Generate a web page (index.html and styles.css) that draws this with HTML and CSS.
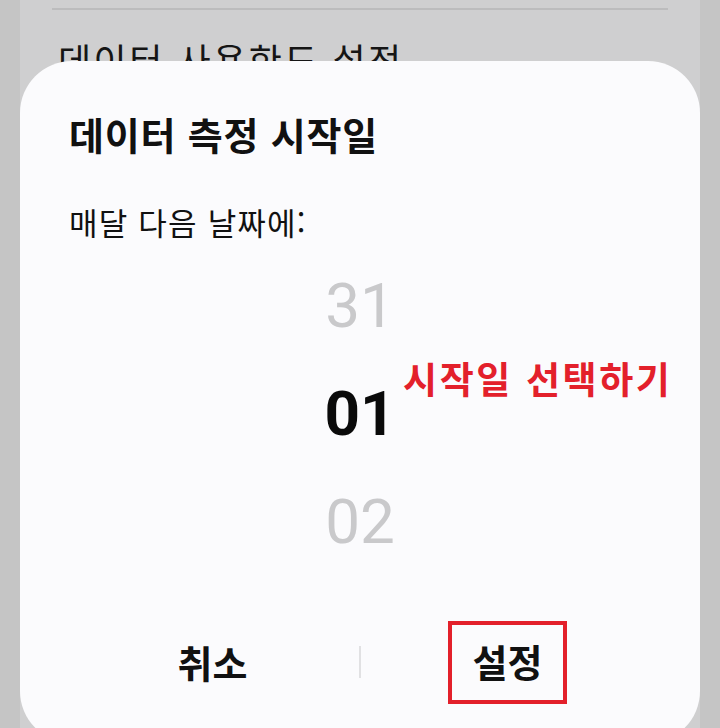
FILE: index.html
```html
<!DOCTYPE html>
<html lang="ko">
<head>
<meta charset="utf-8">
<link rel="stylesheet" href="styles.css">
</head>
<body>
<div class="screen">
  <div class="backdrop">
    <div class="rule"></div>
    <div class="back-title">데이터 사용한도 설정</div>
  </div>
  <div class="dialog">
    <h1 class="title">데이터 측정 시작일</h1>
    <p class="label">매달 다음 날짜에:</p>
    <div class="picker">
      <div class="item dim">31</div>
      <div class="item sel">01</div>
      <div class="item dim">02</div>
    </div>
    <div class="note">시작일 선택하기</div>
    <div class="actions">
      <div class="btn">취소</div>
      <div class="sep"></div>
      <div class="btn"><span class="boxed">설정</span></div>
    </div>
  </div>
</div>
</body>
</html>
```
FILE: styles.css
```css
* { box-sizing: border-box; margin: 0; padding: 0; }
html, body { width: 720px; height: 728px; overflow: hidden; }
body {
  background: #c5c5c5;
  font-family: "Noto Sans CJK KR", "Noto Sans", sans-serif;
  color: #111;
}
.screen { position: relative; width: 720px; height: 728px; }
.backdrop {
  margin: 0 20px;
  height: 728px;
  background: #cfcfd0;
  padding: 8px 32px 0;
}
.rule { height: 2px; background: #bcbcbd; }
.back-title {
  margin-top: 24px;
  padding-left: 6px;
  font-size: 36px;
  line-height: 50px;
  letter-spacing: 2.5px;
  color: #151515;
}
.dialog {
  position: absolute;
  left: 20px;
  top: 61px;
  width: 680px;
  height: 682px;
  background: #fbfbfd;
  border-radius: 52px;
  padding: 46px 49px 0;
}
.title {
  font-size: 38px;
  font-weight: 700;
  line-height: 54px;
  letter-spacing: 0.8px;
}
.label {
  margin-top: 40px;
  font-size: 31px;
  line-height: 42px;
  letter-spacing: 1.2px;
}
.picker {
  display: flex;
  flex-direction: column;
  align-items: center;
  margin-top: 9px;
}
.item {
  font-family: "Roboto", "Noto Sans CJK KR", sans-serif;
  font-size: 62px;
  line-height: 108px;
  height: 108px;
}
.dim { color: #c9c9cb; }
.sel { color: #0a0a0a; font-weight: 700; }
.note {
  position: absolute;
  left: 383px;
  top: 290px;
  font-size: 37px;
  font-weight: 700;
  color: #e3202b;
  line-height: 54px;
  letter-spacing: 2.6px;
}
.actions {
  display: flex;
  align-items: center;
  margin: 46px -3px 0;
  height: 80px;
}
.btn {
  flex: 1;
  text-align: center;
  font-size: 38px;
  font-weight: 700;
  line-height: 52px;
}
.sep { width: 2px; height: 32px; background: #e1e1e3; }
.boxed {
  display: inline-block;
  border: 4px solid #e3202b;
  padding: 10px 21px 13px;
}
```
